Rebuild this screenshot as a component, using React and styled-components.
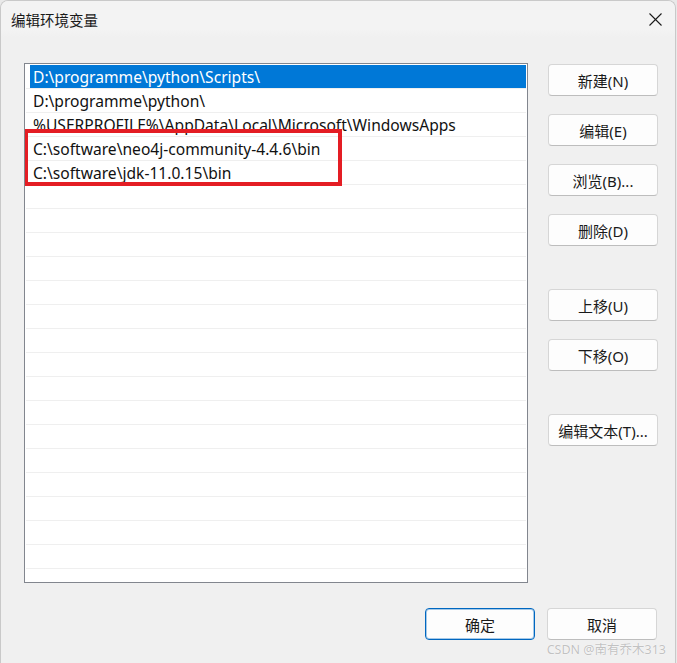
import React from 'react';
import styled, { createGlobalStyle } from 'styled-components';

const GlobalStyle = createGlobalStyle`
	html, body {
		margin: 0;
		padding: 0;
		background: #e9e9e9;
	}
	body {
		font-family: "Noto Sans", "Noto Sans CJK SC", sans-serif;
		color: #1a1a1a;
	}
`

const Window = styled.div`
	position: relative;
	box-sizing: border-box;
	display: flex;
	flex-direction: column;
	width: 676px;
	height: 663px;
	background-color: #f0f0f0;
	border: 1px solid #c9c9c9;
	border-bottom: none;
	border-radius: 8px 8px 0 0;
	overflow: hidden;
`

const TitleBar = styled.div`
	display: flex;
	align-items: center;
	justify-content: space-between;
	height: 36px;
	padding: 0 13px 0 10px;
	background: linear-gradient(#f3f3f3, #f3f3f3 80%, #f0f0f0);
	font-size: 14.5px;
`

const Close = styled.svg`
	width: 13px;
	height: 13px;
	stroke: #1a1a1a;
	stroke-width: 1.1;
`

const Body = styled.div`
	display: flex;
	gap: 20px;
	padding: 26px 0 0 23px;
`

const List = styled.div`
	position: relative;
	box-sizing: border-box;
	width: 504px;
	height: 520px;
	padding: 1px 1px 0 1px;
	background: #fff;
	border: 1px solid #82868e;
	overflow: hidden;
`

const Row = styled.div`
	box-sizing: border-box;
	display: flex;
	height: 24px;
	padding-left: 4px;
	border-bottom: 1px solid #efefef;
`

const Label = styled.div`
	flex: 1;
	padding: 1px 0 0 3px;
	line-height: 22px;
	font-size: 15.6px;
	white-space: nowrap;
	color: ${props => props.selected ? '#fff' : '#111'};
	background-color: ${props => props.selected ? '#0078d7' : 'transparent'};
`

const Mark = styled.div`
	position: absolute;
	left: -1px;
	top: 65px;
	width: 318px;
	height: 57px;
	box-sizing: border-box;
	border: 4px solid #e41d24;
`

const Side = styled.div`
	display: flex;
	flex-direction: column;
	padding-top: 1px;
`

const Group = styled.div`
	display: flex;
	flex-direction: column;
	gap: 18px;
	margin-bottom: ${props => props.spacing || 0}px;
`

const Button = styled.button`
	box-sizing: border-box;
	width: 110px;
	height: 32px;
	padding: 0;
	font-family: "Noto Sans", "Noto Sans CJK SC", sans-serif;
	font-size: 15px;
	color: #1a1a1a;
	background: #fdfdfd;
	border: 1px solid ${props => props.primary ? '#0067c0' : '#d6d6d6'};
	border-bottom-color: ${props => props.primary ? '#0067c0' : '#bdbdbd'};
	border-radius: 4px;
	box-shadow: ${props => props.primary ? 'inset 0 0 0 1px rgba(0, 103, 192, 0.35)' : 'none'};
`

const Footer = styled.div`
	display: flex;
	justify-content: flex-end;
	gap: 12px;
	padding: 25px 18px 0 0;
`

const Watermark = styled.div`
	position: absolute;
	right: 9px;
	bottom: 5px;
	font-size: 12.5px;
	color: #c2c2c2;
	text-shadow: 0 0 1px #fff, 0 0 1px #fff;
	white-space: nowrap;
`

const paths = [
	'D:\\programme\\python\\Scripts\\',
	'D:\\programme\\python\\',
	'%USERPROFILE%\\AppData\\Local\\Microsoft\\WindowsApps',
	'C:\\software\\neo4j-community-4.4.6\\bin',
	'C:\\software\\jdk-11.0.15\\bin',
];

const rows = Array.from({ length: 21 }, (_, i) => paths[i] || '');

export default function App() {
	return (
		<Window>
			<GlobalStyle />
			<TitleBar>
				<span>编辑环境变量</span>
				<Close viewBox="0 0 13 13">
					<line x1="0.5" y1="0.5" x2="12.5" y2="12.5" />
					<line x1="12.5" y1="0.5" x2="0.5" y2="12.5" />
				</Close>
			</TitleBar>
			<Body>
				<List>
					{rows.map((text, i) => (
						<Row key={i}>
							<Label selected={i === 0}>{text}</Label>
						</Row>
					))}
					<Mark />
				</List>
				<Side>
					<Group spacing={43}>
						<Button>新建(N)</Button>
						<Button>编辑(E)</Button>
						<Button>浏览(B)...</Button>
						<Button>删除(D)</Button>
					</Group>
					<Group spacing={43}>
						<Button>上移(U)</Button>
						<Button>下移(O)</Button>
					</Group>
					<Group>
						<Button>编辑文本(T)...</Button>
					</Group>
				</Side>
			</Body>
			<Footer>
				<Button primary>确定</Button>
				<Button>取消</Button>
			</Footer>
			<Watermark>CSDN @南有乔木313</Watermark>
		</Window>
	);
}
